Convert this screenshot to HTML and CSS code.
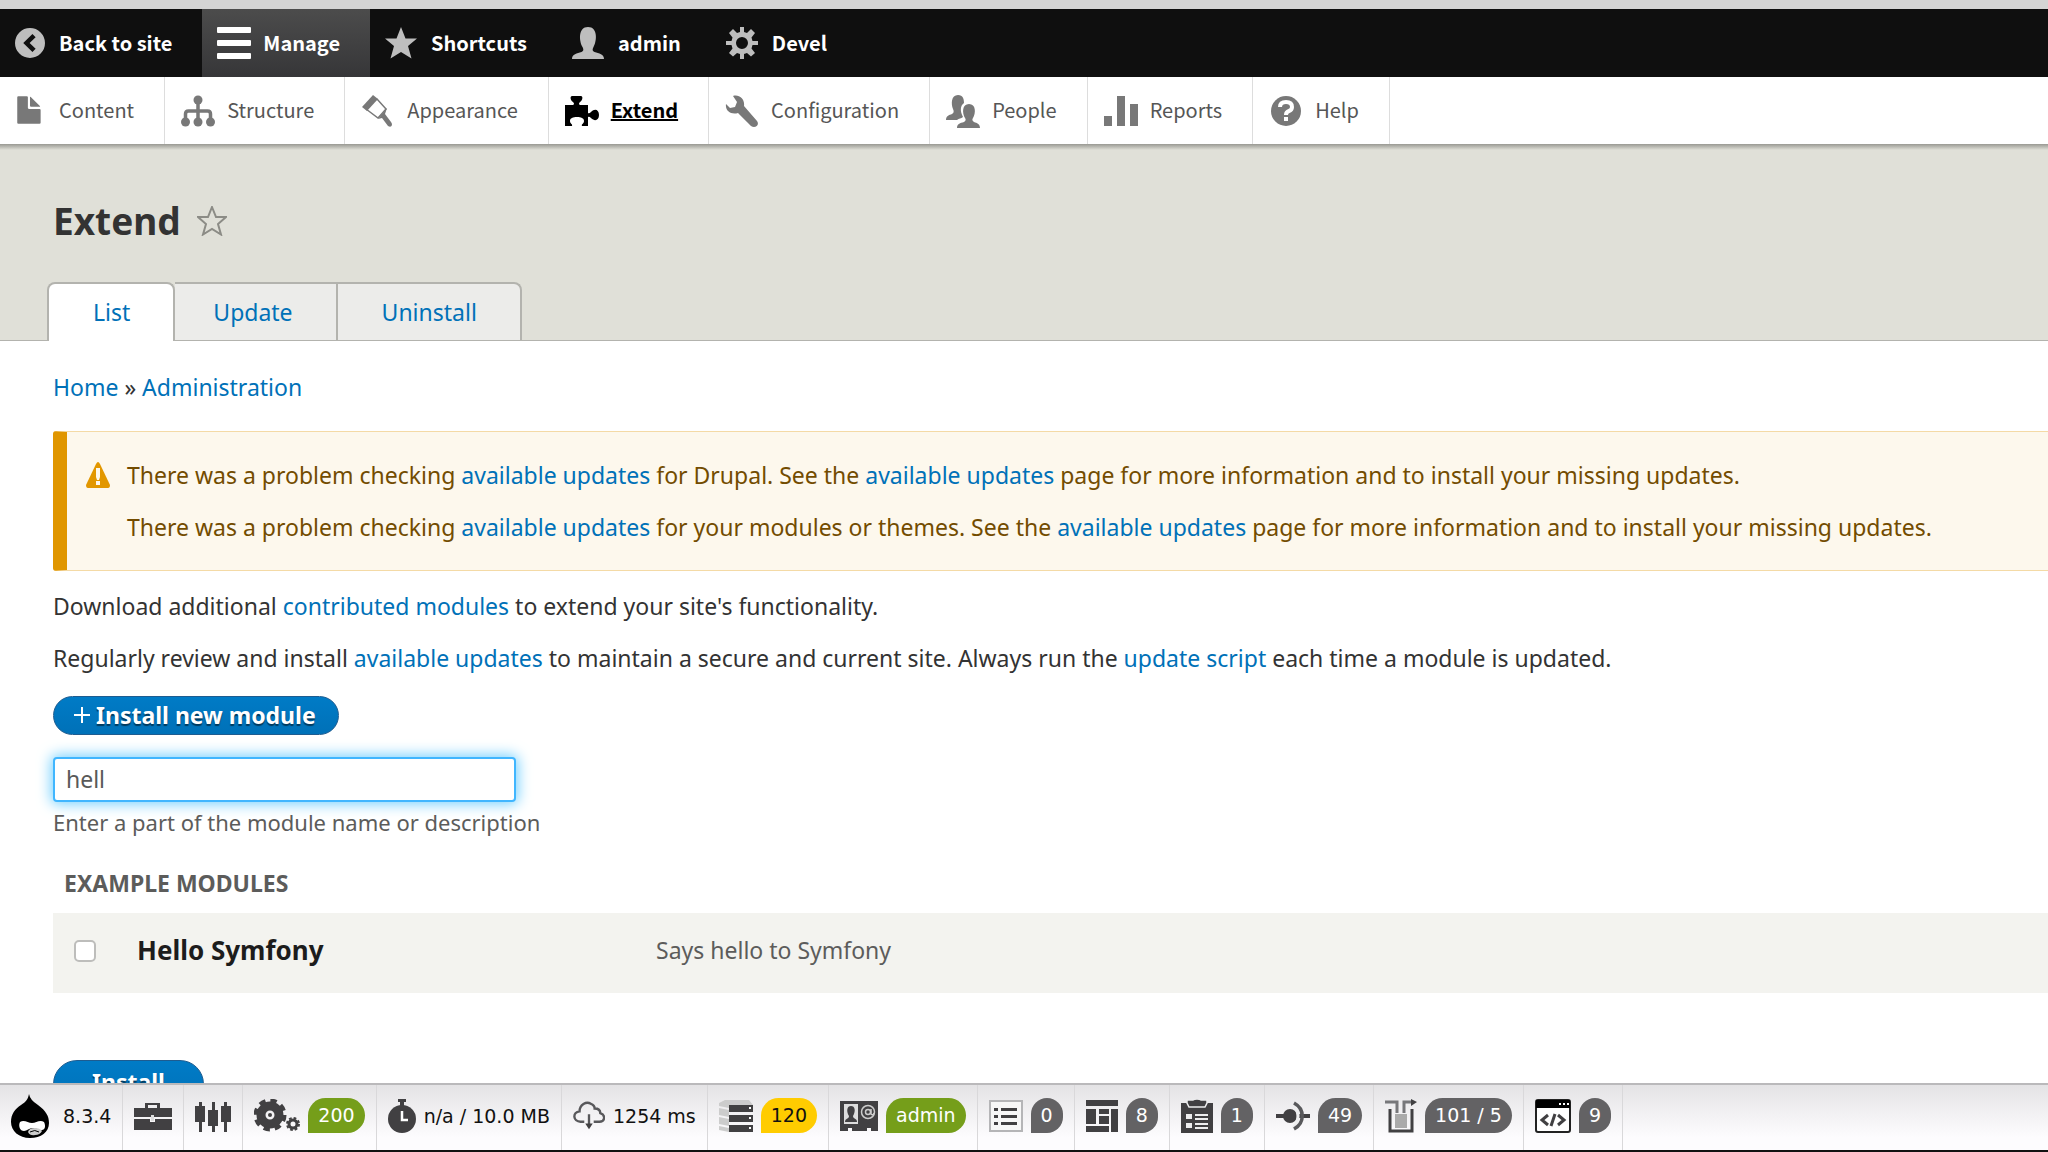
FILE: index.html
```html
<!DOCTYPE html>
<html lang="en">
<head>
<meta charset="utf-8">
<title>Extend</title>
<link rel="stylesheet" href="styles.css">
</head>
<body>
<div class="browser-edge"></div>
<nav class="bar" aria-label="Administration toolbar">
  <a class="bar-item" href="#"><svg class="icon-sm" viewBox="0 0 16 16"><path fill-rule="evenodd" d="M8 0a8 8 0 1 0 0 16A8 8 0 0 0 8 0zM9.300 3.200L11 4.900 7.800 8l3.200 3.100-1.700 1.700L4.400 8z"/></svg>Back to site</a>
  <a class="bar-item active" href="#"><svg class="icon-lg" viewBox="0 0 34 34"><rect y="1" width="34" height="6" rx="1"/><rect y="14" width="34" height="6" rx="1"/><rect y="27" width="34" height="6" rx="1"/></svg>Manage</a>
  <a class="bar-item" href="#"><svg class="icon-md" viewBox="0 0 32 32"><path d="M16 0l4.500 11.500H32l-9 7.500 3.500 12.500L16 25 5.500 31.500 9 19 0 11.500h11.500z"/></svg>Shortcuts</a>
  <a class="bar-item" href="#"><svg class="icon-md" viewBox="0 0 32 32"><path d="M0 32c0-5 5-5.500 9.500-7 2.500-1 2-3 1-5C7 14 6 0 16 0s9 14 5.500 20c-1 2-1.500 4 1 5 4.500 1.500 9.500 2 9.500 7z"/></svg>admin</a>
  <a class="bar-item" href="#"><svg class="icon-md" viewBox="0 0 32 32"><path fill-rule="evenodd" d="M14 0h4v5l3 1 4-4 4 4-3.500 4.500L26.500 14H32v4h-5.500l-1 3.500L29 26l-4 3.500-4-3.500-3 1v5h-4v-5l-3-1-4 3.500L3 26l3.500-4.500-1-3.500H0v-4h5.500l1-3.500L3 6l4-4 4 4 3-1zM16 10a6 6 0 1 0 0 12 6 6 0 0 0 0-12z"/></svg>Devel</a>
</nav>
<nav class="tray" aria-label="Manage menu">
  <a class="tray-item" href="#"><svg class="icon-lg" viewBox="0 0 16 16"><path d="M12.500 7h-5A.5.5 0 0 1 7 6.500v-5A.5.5 0 0 0 6.500 1h-4a.5.5 0 0 0-.5.5v12a.5.5 0 0 0 .5.500h10a.5.5 0 0 0 .5-.500v-6a.5.5 0 0 0-.5-.5zM8.500 6h4c.275 0 .34-.159.146-.354L8.354 1.354C8.159 1.159 8 1.225 8 1.500v4a.5.5 0 0 0 .5.500z"/></svg><span>Content</span></a>
  <a class="tray-item" href="#"><svg class="icon-lg" viewBox="0 0 34 34"><circle cx="17" cy="6" r="4.500"/><circle cx="4.500" cy="28" r="4.500"/><circle cx="17" cy="28" r="4.500"/><circle cx="29.500" cy="28" r="4.500"/><path fill="none" stroke="#787878" stroke-width="3.500" d="M17 8v18M4.500 26v-6q0-3 3-3h19q3 0 3 3v6"/></svg><span>Structure</span></a>
  <a class="tray-item" href="#"><svg class="icon-lg" viewBox="0 0 34 34"><path d="M12 1l5 4L6 17l-5-4z"/><path fill="none" stroke="#787878" stroke-width="1.500" d="M16 5l9 10-8 9L5 15"/><path d="M26 14l-9 11 4-1 6 8q3 2 4-1 0-2-1-3l-6-8z"/></svg><span>Appearance</span></a>
  <a class="tray-item current" href="#"><svg class="icon-lg" viewBox="0 0 34 34"><path d="M0 11h8q2-1 0-3C5 6 5 2 7 2h9c2 0 2 4-1 6q-2 2 0 3h8v8q1 1 3-1c4-4 8-2 8 3s-4 7-8 3q-2-2-3-1v9h-6c-1-2 2-2 2-5s-3-4-7-4-7 1-7 4 3 3 2 5H0z"/></svg><span>Extend</span></a>
  <a class="tray-item" href="#"><svg class="icon-lg" viewBox="0 0 34 34"><path d="M8 2c6-2 12 3 11 10l13 15c3 4-2 8-6 5L13 19C6 21 0 17 1 10l4 4 5-1 2-5z"/></svg><span>Configuration</span></a>
  <a class="tray-item" href="#"><svg class="icon-lg" viewBox="0 0 34 34"><path d="M0 26c0-4 3-5 6-6 2-1 2-3 1-5C5 10 5 1 12 1c5 0 6 4 6 8-4 3-4 8-1 14-2 2-4 1-6 3z"/><path d="M11 34c0-4 3-5 7-6 2-1 2-3 1-4-3-5-3-14 4-14s7 9 4 14c-1 1-1 3 1 4 3 1 6 2 6 6z"/></svg><span>People</span></a>
  <a class="tray-item" href="#"><svg class="icon-lg" viewBox="0 0 34 34"><path d="M0 22h8v10H0zM13 2h8v30h-8zM26 10h8v22h-8z"/></svg><span>Reports</span></a>
  <a class="tray-item" href="#"><svg class="icon-lg" viewBox="0 0 34 34"><circle cx="17" cy="17" r="15"/><path fill="none" stroke="#fff" stroke-width="4" d="M11 13q0-5 6-5t6 5q0 3-3 4t-3 4"/><rect x="15" y="23" width="4" height="4" fill="#fff"/></svg><span>Help</span></a>
</nav>
<main class="page">
  <header class="page-head">
    <div class="title-row">
      <h1>Extend</h1>
      <svg class="star" viewBox="0 0 30 30"><path d="M15 1l4 10h10l-8 7 3 10.500-9-5.500-9 5.500L9 18 1 11h10z"/></svg>
    </div>
    <nav class="tabs" aria-label="Tabs">
      <a class="tab selected" href="#">List</a>
      <a class="tab" href="#">Update</a>
      <a class="tab" href="#">Uninstall</a>
    </nav>
  </header>
  <div class="content">
    <nav class="crumbs" aria-label="Breadcrumb"><a href="#">Home</a> » <a href="#">Administration</a></nav>
    <div class="warning">
      <svg class="warn-icon" viewBox="0 0 24 26"><path fill="#e29700" d="M12 0q1 0 2 2l10 21q0 3-2 3H2q-2 0-2-3L10 2q1-2 2-2z"/><path fill="#fdf8ed" d="M10 6h4v9l-1 3h-2l-1-3zM10 19h4v4h-4z"/></svg>
      <div class="warn-text">
        <p>There was a problem checking <a href="#">available updates</a> for Drupal. See the <a href="#">available updates</a> page for more information and to install your missing updates.</p>
        <p>There was a problem checking <a href="#">available updates</a> for your modules or themes. See the <a href="#">available updates</a> page for more information and to install your missing updates.</p>
      </div>
    </div>
    <p class="intro">Download additional <a href="#">contributed modules</a> to extend your site's functionality.</p>
    <p class="intro">Regularly review and install <a href="#">available updates</a> to maintain a secure and current site. Always run the <a href="#">update script</a> each time a module is updated.</p>
    <button class="action" type="button"><svg class="plus" viewBox="0 0 16 16"><path stroke="#fff" stroke-width="2" d="M8 0v16M0 8h16"/></svg>Install new module</button>
    <input class="filter" id="filter" type="text" value="hell" aria-label="Filter modules">
    <label class="help" for="filter">Enter a part of the module name or description</label>
    <h2>EXAMPLE MODULES</h2>
    <table class="modules">
      <tr>
        <td class="pick"><input type="checkbox" id="hello"></td>
        <td class="name"><label for="hello">Hello Symfony</label></td>
        <td class="about">Says hello to Symfony</td>
      </tr>
    </table>
    <button class="submit" type="submit">Install</button>
  </div>
</main>
<footer class="profiler">
  <a class="cell" href="#"><svg class="drop" viewBox="0 0 38 44"><path d="M18 0q1 6 9 11c8 6 11 11 11 18 0 9-8 15-19 15S0 37 0 28c0-8 4-13 10-17 5-3 7-6 8-11z"/><path fill="#fff" d="M9 28c4-3 8 1 12 1s8-4 12-1c2 4 1 8-2 8-3 1-5-2-9-2s-6 3-9 3c-4 0-6-5-4-9z"/><path fill="#ccc" d="M17 38q1-4 7-4 5 0 7 3-2 4-7 4-5 1-7-3z"/><path fill="none" stroke="#000" stroke-width="1" d="M19 38q5-3 9 0"/></svg><span>8.3.4</span></a>
  <a class="cell" href="#"><svg class="w38" viewBox="0 0 38 30"><path fill-rule="evenodd" d="M0 7h11V2h15v5h12v9H0zM14 7h9V4h-9zM0 18h16v3h5v-3h17v11H0z"/><rect x="17" y="14" width="3" height="6" fill="#ddd"/></svg></a>
  <a class="cell" href="#"><svg class="w36" viewBox="0 0 36 32"><path d="M0 6h10v16H0zM13 10h10v16H13zM26 6h10v16H26zM4 2h3v30H4zM17 2h3v30h-3zM29 2h3v30h-3z"/></svg></a>
  <a class="cell" href="#"><svg class="w46" viewBox="0 0 46 34"><circle cx="16" cy="16" r="9" fill="none" stroke="#414042" stroke-width="9"/><circle cx="16" cy="16" r="14.500" fill="none" stroke="#414042" stroke-width="4" stroke-dasharray="6.400 4.980"/><circle cx="16" cy="16" r="2"/><circle cx="39" cy="25" r="4" fill="none" stroke="#414042" stroke-width="3"/><circle cx="39" cy="25" r="6" fill="none" stroke="#414042" stroke-width="2" stroke-dasharray="2.700 2"/></svg><span class="badge ok">200</span></a>
  <a class="cell" href="#"><svg class="w28" viewBox="0 0 28 34"><circle cx="14" cy="20" r="14"/><rect x="10" width="8" height="3"/><rect x="12" y="3" width="4" height="4"/><path fill="none" stroke="#fff" stroke-width="2.500" d="M14 12v9h6"/></svg><span>n/a / 10.0 MB</span></a>
  <a class="cell" href="#"><svg class="w32" viewBox="0 0 34 30"><path fill="none" stroke="#58585b" stroke-width="2.500" d="M12 22H8c-8 0-9-10-1-11C7 4 14 0 19 3c3 1 4 3 4 5 5 0 6 3 6 5 6 2 5 9-1 9h-6M17 14v11"/><path d="M13 24h8l-4 6z"/></svg><span>1254 ms</span></a>
  <a class="cell" href="#"><svg class="w34" viewBox="0 0 34 32"><path fill="#ccc" d="M0 3l6-3h24l4 5v3H10l-10-2zM0 8l10 2v7L0 15zM0 17l10 2v7L0 24zM0 26l10 2v4L0 30z"/><path d="M10 5h24v7H10zM10 15h24v7H10zM10 25h24v7H10z"/><path fill="#fff" d="M30 7h2v2h-2zM30 17h2v2h-2zM30 27h2v2h-2z"/></svg><span class="badge warn">120</span></a>
  <a class="cell" href="#"><svg class="w38" viewBox="0 0 38 30"><path d="M0 0h38v30h-7v-3h-4v3H12v-3H8v3H0z"/><path fill="#ddd" d="M4 3h14v20H4z"/><path d="M5 21c0-4 4-3 4-6-3-5-2-10 2-10s5 5 2 10c0 3 4 2 4 6z"/><circle cx="28" cy="11" r="6.500" fill="none" stroke="#ccc" stroke-width="1.500"/><circle cx="28" cy="11" r="2.500" fill="none" stroke="#ccc" stroke-width="1.500"/><path fill="none" stroke="#ccc" stroke-width="1.500" d="M31 8v5q2 2 3-1"/></svg><span class="badge ok">admin</span></a>
  <a class="cell" href="#"><svg class="w34" viewBox="0 0 34 32"><rect x="1" y="1" width="32" height="30" fill="#f7f7f7" stroke="#b5b5b7" stroke-width="2"/><path d="M5 8h4v3H5zM5 15h4v3H5zM5 22h4v3H5zM12 8h16v3H12zM12 15h16v3H12zM12 22h16v3H12z"/></svg><span class="badge">0</span></a>
  <a class="cell" href="#"><svg class="w32" viewBox="0 0 32 32"><path d="M0 0h32v6H0zM0 9h10v15H0zM13 9h10v5H13zM13 16h10v8H13zM25 9h7v23h-7zM0 26h23v6H0z"/></svg><span class="badge">8</span></a>
  <a class="cell" href="#"><svg class="w32" viewBox="0 0 32 34"><path d="M0 4h32v30H0z"/><path stroke="#ededee" stroke-width="1.500" d="M6 4V1h6q1-1 4-1t4 1h6v3l-2 4H8z"/><path fill="#ededee" d="M5 15h6v5H5zM5 24h6v5H5zM14 15h13v2H14zM14 19h13v2H14zM14 24h13v2H14zM14 28h13v2H14z"/></svg><span class="badge">1</span></a>
  <a class="cell" href="#"><svg class="w34" viewBox="0 0 34 30"><circle cx="14" cy="15" r="7"/><path d="M0 13h34v4H0z"/><path fill="none" stroke="#eeeeef" stroke-width="3" d="M17 3q10 12 0 24"/><path fill="none" stroke="#58585b" stroke-width="3.500" d="M18 2c11 6 11 20 0 26"/></svg><span class="badge">49</span></a>
  <a class="cell" href="#"><svg class="w32" viewBox="0 0 32 34"><path fill="#aaa" d="M10 15h12v14H10z"/><path fill="none" stroke="#414042" stroke-width="3" d="M5 10v22h22V10"/><path fill="none" stroke="#77777a" stroke-width="3" d="M0 3h12v11M19 14V3h9"/><path d="M26 0l6 3-6 4z"/></svg><span class="badge">101 / 5</span></a>
  <a class="cell" href="#"><svg class="w36" viewBox="0 0 36 34"><rect x="1" y="1" width="34" height="32" rx="2" fill="#fff" stroke="#222" stroke-width="2"/><path fill="#000" d="M1 1h34v8H1z"/><path fill="#fff" d="M24 4h2v2h-2zM28 4h2v2h-2zM32 4h2v2h-2z"/><path fill="none" stroke="#414042" stroke-width="3" d="M13 16l-6 5 6 5M23 16l6 5-6 5M20 15l-4 12"/></svg><span class="badge">9</span></a>
</footer>
</body>
</html>
```
FILE: styles.css
```css
* {
  box-sizing: border-box;
}

body {
  margin: 0;
  height: 100vh;
  display: flex;
  flex-direction: column;
  background: #fff;
  color: #333;
  font: 23px/30px "Noto Sans", "Open Sans", sans-serif;
}

a {
  color: #0071b8;
  text-decoration: none;
}

svg {
  display: block;
  flex: none;
  fill: currentColor;
}

h1,
h2,
p {
  margin: 0;
}

.browser-edge {
  flex: none;
  height: 9px;
  background: #d4d4d4;
}

/* Toolbar */
.bar,
.tray {
  flex: none;
  display: flex;
  font: 20px/28px "Noto Sans CJK SC", "Open Sans", sans-serif;
}

.bar {
  height: 68px;
  background: #0f0f0f;
  font-weight: 700;
}

.bar-item {
  display: flex;
  align-items: center;
  gap: 14px;
  padding: 0 30px 0 15px;
  color: #fff;
}

.bar-item svg {
  color: #bebebe;
}

.bar-item.active {
  gap: 12px;
  background: linear-gradient(#4c4c4c, #363638);
}

.bar-item.active svg {
  color: #fff;
}

.icon-sm {
  width: 30px;
  height: 30px;
}

.icon-md {
  width: 32px;
  height: 32px;
}

.icon-lg {
  width: 34px;
  height: 34px;
}

.tray {
  height: 67px;
}

.tray-item {
  display: flex;
  align-items: center;
  gap: 12px;
  padding: 0 30px 0 16px;
  border-right: 1px solid #ddd;
  color: #565656;
}

.tray-item span {
  padding-bottom: 2px;
}

.tray-item:first-child {
  padding-left: 13px;
}

.tray-item svg {
  color: #787878;
}

.tray-item.current {
  color: #000;
  font-weight: 700;
  text-decoration: underline;
}

.tray-item.current svg {
  color: #000;
}

/* Page */
.page {
  flex: 1;
  min-height: 0;
  overflow: hidden;
}

.page-head {
  padding: 56px 47px 0;
  border-bottom: 1px solid #b3b3ae;
  background: linear-gradient(#999993, #e0e0d8 6px);
}

.title-row {
  display: flex;
  align-items: center;
  gap: 16px;
  padding-left: 6px;
}

h1 {
  font-size: 37px;
  line-height: 42px;
}

.star {
  width: 30px;
  height: 30px;
  fill: none;
  stroke: #8c8c86;
  stroke-width: 2;
}

.tabs {
  display: flex;
  margin-top: 40px;
}

.tab {
  padding: 13px 43px 13px 44px;
  border: solid #b3b3ae;
  border-width: 2px 2px 0 0;
  background: #ececea;
}

.tab.selected {
  margin-bottom: -1px;
  border-left-width: 2px;
  border-radius: 8px 8px 0 0;
  background: #fff;
}

.tab.selected + .tab {
  padding-left: 38px;
}

.tab:last-child {
  border-top-right-radius: 8px;
}

.content {
  display: flex;
  flex-direction: column;
  align-items: flex-start;
  padding: 31px 0 0 53px;
}

.warning {
  align-self: stretch;
  display: flex;
  gap: 17px;
  margin: 29px 0 20px;
  padding: 28px 0;
  border: solid #f4daa6;
  border-width: 1px 0 1px 14px;
  border-left-color: #e09600;
  border-radius: 3px 0 0 3px;
  background: #fdf8ed;
  color: #734c00;
}

.warn-icon {
  width: 24px;
  height: 26px;
  margin: 2px 0 0 19px;
}

.warn-text {
  display: flex;
  flex-direction: column;
  gap: 22px;
}

.intro {
  margin-bottom: 22px;
}

.action,
.submit {
  border: 1px solid #1e5c90;
  border-radius: 20px;
  background: linear-gradient(#007bc6, #0071b8);
  color: #fff;
  font: 700 23px/30px "Noto Sans", "Open Sans", sans-serif;
  text-shadow: 0 2px 1px #00000080;
}

.action {
  display: flex;
  align-items: center;
  gap: 6px;
  height: 39px;
  margin-top: 1px;
  padding: 0 22px 2px 20px;
}

.plus {
  width: 16px;
  height: 16px;
}

.filter {
  width: 463px;
  height: 45px;
  margin: 22px 0 5px;
  padding: 0 11px 2px;
  border: 2px solid #40b6ff;
  border-radius: 4px;
  background: #fff;
  box-shadow: 0 0 14px 2px #73d0ff;
  color: #595959;
  font: 23px/30px "Noto Sans", "Open Sans", sans-serif;
}

.help {
  color: #5c5c5b;
  font-size: 22px;
}

h2 {
  margin: 31px 0 15px 11px;
  color: #5c5c5b;
  font-size: 23px;
  line-height: 30px;
}

.modules {
  align-self: stretch;
  border-collapse: collapse;
  background: #f3f3ef;
}

.modules td {
  height: 80px;
  padding: 0 0 6px;
}

.pick {
  width: 84px;
}

.pick input {
  appearance: none;
  display: block;
  width: 22px;
  height: 22px;
  margin: 2px 0 0 21px;
  border: 2px solid #bdbdbb;
  border-radius: 5px;
  background: #fff;
}

.name {
  width: 519px;
  color: #1c1c1c;
  font-size: 26px;
  font-weight: 700;
}

.about {
  color: #5c5c5b;
}

.submit {
  margin-top: 67px;
  height: 48px;
  padding: 0 38px 4px;
  border-radius: 24px;
}

/* Profiler bar */
.profiler {
  flex: none;
  display: flex;
  height: 69px;
  border-top: 2px solid #bab9bb;
  border-bottom: 2px solid #111;
  background: linear-gradient(#e4e3e5, #fdfcfe 80%);
  font: 19px/26px "DejaVu Sans", sans-serif;
}

.cell {
  display: flex;
  align-items: center;
  gap: 8px;
  padding: 0 11px 4px;
  border-right: 1px solid #d9d8da;
  color: #111;
}

.cell svg {
  color: #414042;
}

.cell .drop {
  width: 38px;
  height: 44px;
  margin-right: 6px;
  color: #000;
}

.w28 { width: 28px; }
.w32 { width: 32px; }
.w34 { width: 34px; }
.w36 { width: 36px; }
.w38 { width: 38px; }
.w46 { width: 46px; }

.badge {
  height: 35px;
  padding: 0 10px;
  border-radius: 18px 18px 18px 0;
  background: #636264;
  color: #fff;
  line-height: 35px;
}

.badge.ok {
  background: #759e1a;
}

.badge.warn {
  background: #ffcc00;
  color: #111;
}
```
